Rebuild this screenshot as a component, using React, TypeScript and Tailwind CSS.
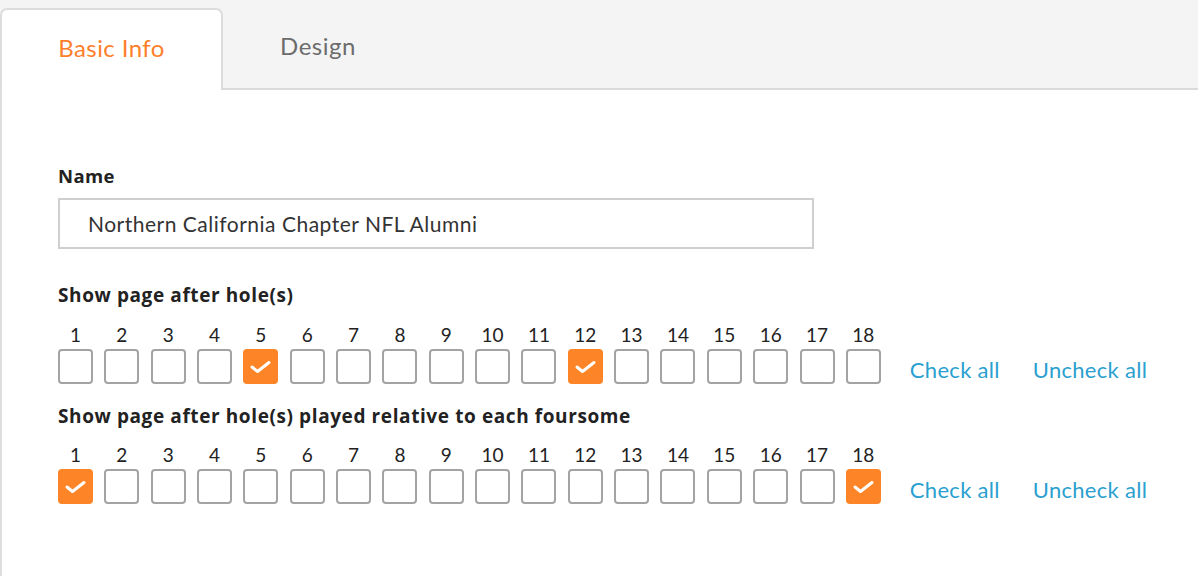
import React from "react";

const FONT = { fontFamily: "Lato, 'Open Sans', Arial, sans-serif" };
const BOLD = { fontFamily: "'Open Sans', Lato, Arial, sans-serif" };

function Box({ checked }: { checked: boolean }) {
  if (checked) {
    return (
      <div className="w-[35px] h-[35px] rounded-[4px] bg-[#fd8527] flex items-center justify-center">
        <svg width="35" height="35" viewBox="0 0 35 35">
          <polyline points="9,18 14.5,22.5 26,13.5" fill="none" stroke="#fff" strokeWidth="3" strokeLinecap="round" strokeLinejoin="round" />
        </svg>
      </div>
    );
  }
  return <div className="w-[35px] h-[35px] rounded-[4px] border-2 border-[#a3a3a3] bg-white" />;
}

function HoleRow({ checked }: { checked: number[] }) {
  const holes = Array.from({ length: 18 }, (_, i) => i + 1);
  return (
    <div className="flex items-end">
      <div className="flex gap-[11.35px]">
        {holes.map((h) => (
          <div key={h} className="flex flex-col items-center w-[35px]">
            <span className="text-[19px] leading-[22px] text-[#222] mb-[3px]">{h}</span>
            <Box checked={checked.includes(h)} />
          </div>
        ))}
      </div>
      <div className="flex items-center h-[35px] pt-[6px] ml-[29px] gap-[33px] text-[22px] tracking-[0.3px] text-[#2a9fd0]">
        <span>Check all</span>
        <span>Uncheck all</span>
      </div>
    </div>
  );
}

export default function App() {
  return (
    <div className="w-[1198px] h-[576px] bg-white overflow-hidden" style={FONT}>
      <div className="h-[90px] bg-[#f4f4f4] border-b-2 border-[#dadada] flex items-end">
        <div className="w-[223px] h-[82px] -mb-[2px] bg-white border-2 border-b-0 border-[#dcdcdc] rounded-t-[7px] flex items-center justify-center pb-[4px]">
          <span className="text-[24px] tracking-[0.4px] text-[#fd7f2c]">Basic Info</span>
        </div>
        <div className="w-[190px] h-[80px] flex items-center justify-center pb-[4px]">
          <span className="text-[24px] tracking-[0.5px] text-[#6c6c6c]">Design</span>
        </div>
      </div>
      <div className="h-[486px] border-l-2 border-[#dedede] pl-[56px] pt-[73px]">
        <div className="text-[18.5px] tracking-[0.4px] font-bold text-[#222] leading-[26px]" style={BOLD}>Name</div>
        <div className="mt-[9px] w-[756px] h-[51px] border-2 border-[#cfcfcf] flex items-center pl-[28px] text-[21px] tracking-[0.5px] text-[#333]">
          Northern California Chapter NFL Alumni
        </div>
        <div className="mt-[34px] text-[19px] tracking-[0.6px] font-bold text-[#222] leading-[24px]" style={BOLD}>Show page after hole(s)</div>
        <div className="mt-[17px]">
          <HoleRow checked={[5, 12]} />
        </div>
        <div className="mt-[20px] text-[19px] tracking-[0.6px] font-bold text-[#222] leading-[24px]" style={BOLD}>Show page after hole(s) played relative to each foursome</div>
        <div className="mt-[16px]">
          <HoleRow checked={[1, 18]} />
        </div>
      </div>
    </div>
  );
}
